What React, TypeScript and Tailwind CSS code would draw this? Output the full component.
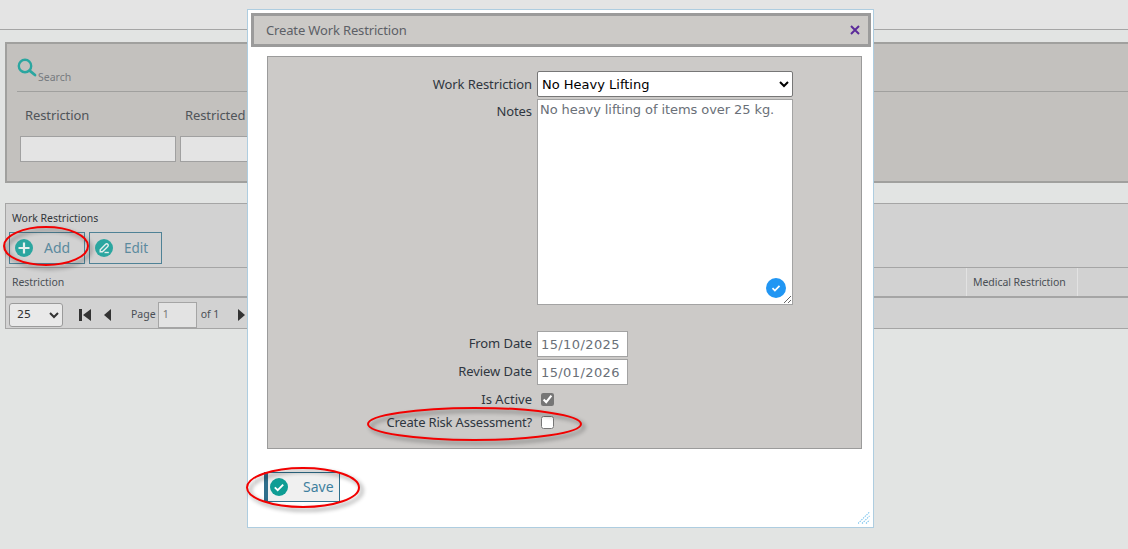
import React from "react";

const Ellipse = ({ cn, w, h }: { cn: string; w: number; h: number }) => (
  <svg className={`${cn} drop-shadow-[3px_3px_2px_rgba(0,0,0,0.45)]`} width={w + 4} height={h + 4} viewBox={`-2 -2 ${w + 4} ${h + 4}`} fill="none">
    <ellipse cx={w / 2} cy={h / 2} rx={w / 2 - 1} ry={h / 2 - 1} stroke="#f20000" strokeWidth="2" />
  </svg>
);

const Circle = ({ kind, color = "#2ba6a0" }: { kind: "plus" | "edit" | "check"; color?: string }) => (
  <svg width="18" height="18" viewBox="0 0 18 18" className="shrink-0">
    <circle cx="9" cy="9" r="9" fill={color} />
    {kind === "plus" && <path d="M9 3.5v11M3.5 9h11" stroke="#e6efee" strokeWidth="2.2" />}
    {kind === "check" && <path d="M4.8 9.4l2.9 2.8 5.5-5.6" stroke="#fff" strokeWidth="1.9" fill="none" />}
    {kind === "edit" && (
      <g stroke="#e6efee" strokeWidth="1.4" fill="none">
        <path d="M5.2 10.8l5.4-5.5c.7-.7 1.6-.6 2.2 0 .6.6.6 1.5 0 2.1l-5.4 5.3H5.2z" />
        <path d="M9.5 13.5h4.3" />
      </g>
    )}
  </svg>
);

const Row = ({
  label,
  children,
  cn = "",
  labelCn = "tracking-[-0.08px]",
}: {
  label: string;
  children: React.ReactNode;
  cn?: string;
  labelCn?: string;
}) => (
  <div className={`flex items-center ${cn}`}>
    <label className={`w-[264px] text-right text-[13px] leading-none whitespace-nowrap text-[#2f3640] ${labelCn}`}>{label}</label>
    <div className="ml-[5px] flex items-center">{children}</div>
  </div>
);

const dateCls =
  "h-[26px] w-[91px] border border-[#a3a3a3] bg-white pl-[3px] text-[13px] tracking-[0.4px] text-[#6a7078] font-['DejaVu_Sans',sans-serif] outline-none";

export default function App() {
  return (
    <div className="relative h-[549px] w-[1128px] overflow-hidden bg-[#e2e4e3] font-['Noto_Sans',sans-serif]">
      <div className="h-[30px] border-b border-[#a5a5a5] bg-[#e4e4e4]" />

      <section className="ml-[5px] mt-[12px] h-[141px] w-[1130px] border-2 border-[#a0a09e] bg-[#c3c1be]">
        <div className="ml-[10px] mt-[13px] flex h-[35px] items-start border-b border-[#a0a09e]">
          <svg width="20" height="20" viewBox="0 0 20 20" fill="none" className="mt-[1px]">
            <circle cx="8" cy="8" r="6.2" stroke="#2ba6a0" strokeWidth="2.4" />
            <path d="M12.6 12.6l5.4 4.4" stroke="#2ba6a0" strokeWidth="2.8" strokeLinecap="round" />
          </svg>
          <span className="ml-[1px] mt-[13px] text-[10.5px] leading-[14px] text-[#777b80]">Search</span>
        </div>
        <div className="ml-[18px] mt-[14px] flex gap-[118px] text-[13px] leading-[18px] tracking-[-0.1px] text-[#50555a]">
          <span className="w-[42px] whitespace-nowrap">Restriction</span>
          <span className="whitespace-nowrap">Restricted Duties</span>
        </div>
        <div className="ml-[13px] mt-[12px] flex gap-[4px]">
          <input className="h-[26px] w-[156px] border border-[#a0a0a0] bg-[#e4e4e4]" />
          <input className="h-[26px] w-[156px] border border-[#a0a0a0] bg-[#e4e4e4]" />
        </div>
      </section>

      <section className="ml-[5px] mt-[20px] h-[126px] w-[1130px] border border-[#a5a5a5] bg-[#d2d2d2]">
        <div className="ml-[6px] mt-[7px] text-[10.5px] leading-[14px] text-[#33363a]">Work Restrictions</div>
        <div className="ml-0 mt-[7px] flex h-[36px] gap-[4px] border-b border-[#a5a5a5] pl-[3px]">
          <button className="flex h-[32px] w-[76px] items-center border border-[#4f8296] pl-[5px] text-[14px] text-[#5b8a9e]">
            <Circle kind="plus" />
            <span className="ml-[11px] pb-[1px]">Add</span>
          </button>
          <button className="flex h-[32px] w-[73px] items-center border border-[#4f8296] pl-[5px] text-[13.5px] text-[#5b8a9e]">
            <Circle kind="edit" />
            <span className="ml-[11px]">Edit</span>
          </button>
        </div>
        <div className="flex h-[30px] items-center border-b-2 border-[#a5a5a5] text-[10.5px] tracking-[-0.05px] text-[#4a4f55]">
          <span className="ml-[6px] w-[954px] pt-[1px]">Restriction</span>
          <span className="flex h-full w-[112px] items-center border-x border-[#e2e2e2] pl-[6px] pt-[1px]">Medical Restriction</span>
        </div>
        <div className="flex h-[30px] items-center pt-[3px] text-[10.5px] text-[#4a4f55]">
          <select defaultValue="25" className="ml-[3px] h-[24px] w-[54px] rounded-[3px] border border-[#9a9a9a] bg-[#e9e9e9] pl-[3px] text-[11px] font-['DejaVu_Sans',sans-serif] text-[#333]">
            <option>25</option>
          </select>
          <svg width="13" height="12" viewBox="0 0 13 12" className="ml-[16px]" fill="#333">
            <path d="M0 0h3v12H0zM12 0v12L4 6z" />
          </svg>
          <svg width="7" height="12" viewBox="0 0 7 12" className="ml-[12px]" fill="#333">
            <path d="M7 0v12L0 6z" />
          </svg>
          <span className="ml-[20px]">Page</span>
          <span className="ml-[2px] flex h-[26px] w-[39px] items-center border border-[#a5a5a5] bg-[#e3e3e3] pl-[4px] text-[#777]">1</span>
          <span className="ml-[4px]">of 1</span>
          <svg width="7" height="12" viewBox="0 0 7 12" className="ml-[19px]" fill="#333">
            <path d="M0 0v12l7-6z" />
          </svg>
        </div>
      </section>

      <Ellipse cn="absolute left-[1px] top-[224px]" w={86} h={40} />

      <div className="absolute left-[247px] top-[9px] h-[519px] w-[627px] border border-[#aecde0] bg-white">
        <header className="ml-[3px] mt-[3px] flex h-[34px] w-[620px] items-center justify-between border-[3px] border-[#9b9b9b] bg-[#cccac7] pl-[12px] pr-[8px]">
          <span className="pt-[1px] text-[13px] tracking-[-0.15px] text-[#5c6066]">Create Work Restriction</span>
          <svg width="10" height="10" viewBox="0 0 10 10">
            <path d="M1 1l8 8M9 1l-8 8" stroke="#5b2a9a" strokeWidth="2" />
          </svg>
        </header>

        <form className="ml-[19px] mt-[9px] h-[393px] w-[595px] border border-[#9b9b9b] bg-[#cccac8] pt-[14px]">
          <Row label="Work Restriction">
            <select defaultValue="No Heavy Lifting" className="h-[26px] w-[256px] rounded-[2px] border border-[#777] bg-white pl-0 font-['DejaVu_Sans',sans-serif] text-[13px] text-black">
              <option>No Heavy Lifting</option>
            </select>
          </Row>
          <div className="mt-[2px] flex items-start">
            <label className="mt-[5px] w-[264px] text-right text-[13px] leading-[14px] tracking-[-0.08px] text-[#2f3640]">Notes</label>
            <div className="relative ml-[5px] h-[206px] w-[256px]">
              <textarea
                defaultValue="No heavy lifting of items over 25 kg."
                className="block h-[206px] w-[256px] border border-[#a3a3a3] bg-white px-[2px] pb-0 pt-[1px] font-['DejaVu_Sans',sans-serif] text-[13px] leading-[18px] tracking-[-0.08px] text-[#6a7078] outline-none"
              />
              <span className="absolute bottom-[7px] right-[7px] flex h-[20px] w-[20px] items-center justify-center rounded-full bg-[#2196f3]">
                <svg width="10" height="10" viewBox="0 0 10 10" fill="none">
                  <path d="M1.5 5.2l2.4 2.4 4.6-4.8" stroke="#fff" strokeWidth="1.7" />
                </svg>
              </span>
            </div>
          </div>
          <Row label="From Date" cn="mt-[26px]" labelCn="pb-[2px] tracking-[-0.08px]">
            <input className={dateCls} defaultValue="15/10/2025" />
          </Row>
          <Row label="Review Date" cn="mt-[2px]" labelCn="pb-[2px] tracking-[-0.08px]">
            <input className={dateCls} defaultValue="15/01/2026" />
          </Row>
          <Row label="Is Active" cn="mt-[7px] h-[14px]" labelCn="tracking-[0.02px]">
            <input type="checkbox" defaultChecked className="ml-[4px] h-[13px] w-[13px] accent-[#767676]" />
          </Row>
          <Row label="Create Risk Assessment?" cn="mt-[9px] h-[14px]" labelCn="tracking-[-0.18px]">
            <input type="checkbox" className="ml-[4px] h-[13px] w-[13px]" />
          </Row>
        </form>

        <button className="ml-[16px] mt-[23px] flex h-[30px] w-[76px] items-center border border-l-[4px] border-[#2f6f8c] bg-[#f0f0f0] pl-[2px] text-[14px] text-[#3f7f9e]">
          <Circle kind="check" color="#0f9d94" />
          <span className="ml-[15px] pb-[1px]">Save</span>
        </button>

        <svg className="absolute bottom-[3px] right-[3px]" width="12" height="12" viewBox="0 0 12 12" stroke="#7cc4ee" strokeWidth="1.1" strokeDasharray="1.4 1">
          <path d="M0 11.5L11.5 0M4 11.5L11.5 4M8 11.5L11.5 8" />
        </svg>
      </div>

      <Ellipse cn="absolute left-[365px] top-[405px]" w={215} h={34} />
      <Ellipse cn="absolute left-[244px] top-[465px]" w={114} h={41} />
    </div>
  );
}
